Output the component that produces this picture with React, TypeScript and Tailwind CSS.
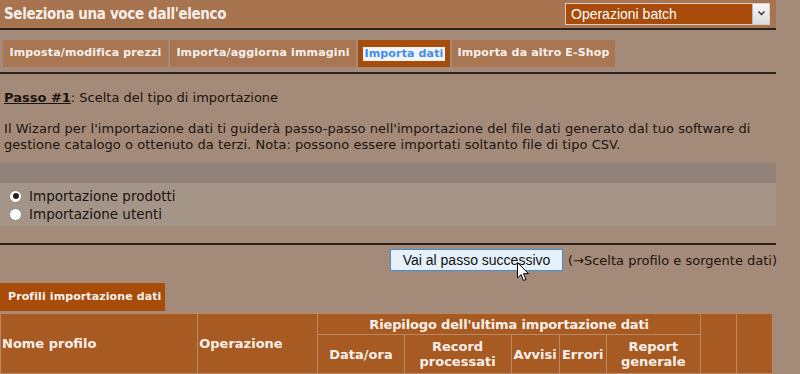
import React from "react";

const tabs = [
  { label: "Imposta/modifica prezzi", w: "w-[165px]" },
  { label: "Importa/aggiorna immagini", w: "w-[186px]" },
  { label: "Importa dati", w: "w-[92px]", active: true },
  { label: "Importa da altro E-Shop", w: "w-[163px]" },
];

const Cursor = () => (
  <svg className="absolute left-[517px] top-[262px]" width="13" height="21" viewBox="0 0 13 21">
    <path d="M0.5 0.5 L0.5 16 L4 12.5 L6.5 18.5 L9 17.5 L6.5 11.7 L11.5 11.7 Z" fill="#fff" stroke="#000" strokeWidth="1" strokeLinejoin="round" />
  </svg>
);

const App = () => {
  return (
    <div className="relative w-[800px] h-[374px] overflow-hidden bg-[#a48a78] text-[#1c1410] font-['DejaVu_Sans',sans-serif]">
      {/* header */}
      <div className="w-[776px] h-[28px] bg-[#a8744f] flex items-center justify-between pl-[4px] pr-[6px]">
        <span className="text-[15px] font-bold text-[#f6efe9] leading-none tracking-[-0.35px] font-['DejaVu_Sans_Condensed',sans-serif]">Seleziona una voce dall'elenco</span>
        <div className="flex w-[205px] h-[22px] border border-[#d6d0cc] bg-[#a84b0b] mt-[-1px]">
          <span className="flex-1 pl-[5px] text-[14px] leading-[20px] text-white font-['Liberation_Sans',sans-serif]">Operazioni batch</span>
          <span className="w-[17px] h-[20px] bg-gradient-to-b from-[#f7f7f7] to-[#dcdcdc] border-l border-[#b8b8b8] flex items-center justify-center">
            <svg width="7" height="5" viewBox="0 0 7 5"><path d="M0.5 0.5 L3.5 3.5 L6.5 0.5" fill="none" stroke="#333" strokeWidth="1.4" /></svg>
          </span>
        </div>
      </div>
      <div className="w-[776px] h-[2px] bg-[#2c221c]" />

      {/* tabs */}
      <div className="flex gap-[2px] pl-[3px] mt-[10px] h-[27px]">
        {tabs.map((t) => (
          <div
            key={t.label}
            className={`${t.w} flex items-center justify-center font-bold text-[11px] tracking-[0.15px] ${t.active ? "bg-[#a74c0b]" : "bg-[#a87652] text-[#f8f0ea]"}`}
          >
            {t.active ? <span className="bg-[#f4f4f4] text-[#3b8ef2] px-[1px] leading-[14px]">{t.label}</span> : t.label}
          </div>
        ))}
      </div>
      <div className="w-[776px] h-[2px] bg-[#2c221c] mt-[5px]" />

      {/* step */}
      <p className="pl-[4px] mt-[16px] text-[13px] leading-[16px]">
        <span className="font-bold underline">Passo #1</span>: Scelta del tipo di importazione
      </p>
      <p className="pl-[4px] mt-[15px] text-[13px] leading-[16px] w-[776px] tracking-[0.05px]">
        Il Wizard per l'importazione dati ti guiderà passo-passo nell'importazione del file dati generato dal tuo software di gestione catalogo o ottenuto da terzi. Nota: possono essere importati soltanto file di tipo CSV.
      </p>

      {/* radio panel */}
      <div className="w-[776px] mt-[10px]">
        <div className="h-[20px] bg-[#918379]" />
        <div className="h-[43px] bg-[#a59488] pl-[9px] pt-[4px] text-[13.5px] leading-[18px] flex flex-col">
          <label className="flex items-center gap-[7px]">
            <span className="w-[13px] h-[13px] rounded-full bg-white border border-[#8a8a8a] flex items-center justify-center">
              <span className="w-[6px] h-[6px] rounded-full bg-[#222]" />
            </span>
            Importazione prodotti
          </label>
          <label className="flex items-center gap-[7px]">
            <span className="w-[13px] h-[13px] rounded-full bg-white border border-[#8a8a8a]" />
            Importazione utenti
          </label>
        </div>
      </div>
      <div className="w-[776px] h-[2px] bg-[#2c221c] mt-[17px]" />

      {/* next step */}
      <div className="flex items-center mt-[4px] pl-[390px] gap-[5px]">
        <button className="w-[173px] h-[22px] bg-[#e6f1fb] border border-[#3f8fd2] text-[14px] leading-none text-[#111] font-['Liberation_Sans',sans-serif]">
          Vai al passo successivo
        </button>
        <span className="text-[13px] mt-[2px]">(→Scelta profilo e sorgente dati)</span>
      </div>

      {/* profiles */}
      <div className="mt-[12px] w-[165px] h-[28px] bg-[#a74c0b] flex items-center pl-[8px] text-[11px] font-bold text-[#f8f0ea] tracking-[0.1px]">
        Profili importazione dati
      </div>
      <table className="mt-[2px] w-[773px] border-collapse text-[#f8efe8] font-bold text-[13px] leading-[15px] bg-[#a85a23]">
        <tbody>
          <tr className="h-[21px]">
            <td rowSpan={2} className="w-[197px] border border-[#b98866] text-left pl-[1px]">Nome profilo</td>
            <td rowSpan={2} className="w-[120px] border border-[#b98866] text-left pl-[1px]">Operazione</td>
            <td colSpan={5} className="border border-[#b98866] text-center tracking-[-0.15px]">Riepilogo dell'ultima importazione dati</td>
            <td rowSpan={2} className="w-[36px] border border-[#b98866]" />
            <td rowSpan={2} className="w-[36px] border border-[#b98866]" />
          </tr>
          <tr className="h-[39px]">
            <td className="w-[86px] border border-[#b98866] text-center">Data/ora</td>
            <td className="w-[107px] border border-[#b98866] text-center">Record<br />processati</td>
            <td className="w-[48px] border border-[#b98866] text-center">Avvisi</td>
            <td className="w-[47px] border border-[#b98866] text-center">Errori</td>
            <td className="w-[94px] border border-[#b98866] text-center">Report<br />generale</td>
          </tr>
        </tbody>
      </table>

      <Cursor />
    </div>
  );
};

export default App;
